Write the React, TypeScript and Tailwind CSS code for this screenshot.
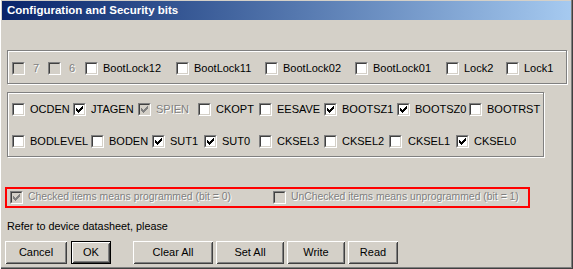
import type { ReactNode } from "react";

type Bit = { label: string; w: number; checked?: boolean; disabled?: boolean; gap?: number; size?: string };

const row1: Bit[] = [
  { label: "7", w: 36, disabled: true, gap: 8 },
  { label: "6", w: 37, disabled: true, gap: 8 },
  { label: "BootLock12", w: 91 },
  { label: "BootLock11", w: 89 },
  { label: "BootLock02", w: 90 },
  { label: "BootLock01", w: 91 },
  { label: "Lock2", w: 60 },
  { label: "Lock1", w: 50 },
];

const row2: Bit[] = [
  { label: "OCDEN", w: 61 },
  { label: "JTAGEN", w: 65, checked: true },
  { label: "SPIEN", w: 60, checked: true, disabled: true },
  { label: "CKOPT", w: 61 },
  { label: "EESAVE", w: 65 },
  { label: "BOOTSZ1", w: 73, checked: true },
  { label: "BOOTSZ0", w: 72, checked: true },
  { label: "BOOTRST", w: 70 },
];

const row3: Bit[] = [
  { label: "BODLEVEL", w: 79 },
  { label: "BODEN", w: 61 },
  { label: "SUT1", w: 52, checked: true },
  { label: "SUT0", w: 55, checked: true },
  { label: "CKSEL3", w: 65 },
  { label: "CKSEL2", w: 65 },
  { label: "CKSEL1", w: 67, gap: 6 },
  { label: "CKSEL0", w: 60, checked: true },
];

function CheckBox({ checked, disabled }: { checked?: boolean; disabled?: boolean }) {
  return (
    <div className="shrink-0 w-[13px] h-[13px] border border-t-[#808080] border-l-[#808080] border-b-white border-r-white">
      <div
        className={`w-full h-full border border-t-[#404040] border-l-[#404040] border-b-[#d4d0c8] border-r-[#d4d0c8] flex items-center justify-center ${
          disabled ? "bg-[#d4d0c8]" : "bg-white"
        }`}
      >
        {checked && (
          <svg width="7" height="7" viewBox="0 0 7 7" shapeRendering="crispEdges">
            <path
              d="M6 0h1v3h-1v1h-1v1h-1v1h-1v1h-1v-1h-1v-1h-1v-3h1v1h1v1h1v-1h1v-1h1z"
              fill={disabled ? "#808080" : "#000"}
            />
          </svg>
        )}
      </div>
    </div>
  );
}

function Item({ bit }: { bit: Bit }) {
  return (
    <div className="flex items-center h-[13px] shrink-0" style={{ width: bit.w }}>
      <CheckBox checked={bit.checked} disabled={bit.disabled} />
      <span
        className={`leading-none whitespace-nowrap ${bit.size ?? "text-[11px]"} ${
          bit.disabled ? "text-[#808080] [text-shadow:1px_1px_0_#fff]" : "text-black"
        }`}
        style={{ marginLeft: bit.gap ?? 5 }}
      >
        {bit.label}
      </span>
    </div>
  );
}

function Button({ w, children, isDefault }: { w: number; children: ReactNode; isDefault?: boolean }) {
  return (
    <div
      className={`h-[23px] shrink-0 ${isDefault ? "border border-black" : ""}`}
      style={{ width: w }}
    >
      <div className="h-full w-full flex items-center justify-center text-[11px] text-black bg-[#d4d0c8] shadow-[inset_1px_1px_0_#fff,inset_-1px_-1px_0_#404040,inset_2px_2px_0_#d4d0c8,inset_-2px_-2px_0_#808080]">
        {children}
      </div>
    </div>
  );
}

export default function App() {
  return (
    <div className="w-[573px] h-[269px] bg-[#d4d0c8] font-['Liberation_Sans',Arial,sans-serif] flex flex-col shadow-[inset_1px_0_0_#fff,inset_-1px_-1px_0_#404040,inset_-2px_-2px_0_#808080] overflow-hidden">
      {/* Title bar */}
      <div className="mt-[1px] mx-[2px] h-[19px] bg-gradient-to-r from-[#0a246a] to-[#a6caf0] flex items-center pl-[5px]">
        <span className="text-white font-bold text-[11.5px]">Configuration and Security bits</span>
      </div>

      {/* Lock bits */}
      <div className="mt-[30px] ml-[7px] w-[560px] h-[34px] border border-[#808080] shadow-[inset_1px_1px_0_#fff,1px_1px_0_#fff] pl-[4px] pt-[11px] flex">
        {row1.map((b) => (
          <Item key={b.label} bit={b} />
        ))}
      </div>

      {/* Fuse bits */}
      <div className="mt-[8px] ml-[7px] w-[537px] h-[65px] border border-[#808080] shadow-[inset_1px_1px_0_#fff,1px_1px_0_#fff] pl-[4px] pt-[10px] flex flex-col gap-[19px]">
        <div className="flex">
          {row2.map((b) => (
            <Item key={b.label} bit={b} />
          ))}
        </div>
        <div className="flex">
          {row3.map((b) => (
            <Item key={b.label} bit={b} />
          ))}
        </div>
      </div>

      {/* Legend */}
      <div className="mt-[30px] ml-[5px] w-[525px] h-[21px] border-2 border-[#ff0000] flex items-center pl-[3px]">
        <Item
          bit={{
            label: "Checked items means programmed (bit = 0)",
            w: 263,
            checked: true,
            disabled: true,
            size: "text-[10.4px]",
          }}
        />
        <Item
          bit={{
            label: "UnChecked items means unprogrammed (bit = 1)",
            w: 250,
            disabled: true,
            size: "text-[10.4px]",
          }}
        />
      </div>

      <div className="mt-[11px] ml-[7px] text-[10.8px] text-black leading-[14px]">
        Refer to device datasheet, please
      </div>

      {/* Buttons */}
      <div className="mt-[8px] ml-[5px] flex">
        <Button w={62}>Cancel</Button>
        <div className="ml-[4px]">
          <Button w={40} isDefault>
            OK
          </Button>
        </div>
        <div className="ml-[22px] flex gap-[3px]">
          <Button w={80}>Clear All</Button>
          <Button w={68}>Set All</Button>
          <Button w={58}>Write</Button>
          <Button w={50}>Read</Button>
        </div>
      </div>
    </div>
  );
}
